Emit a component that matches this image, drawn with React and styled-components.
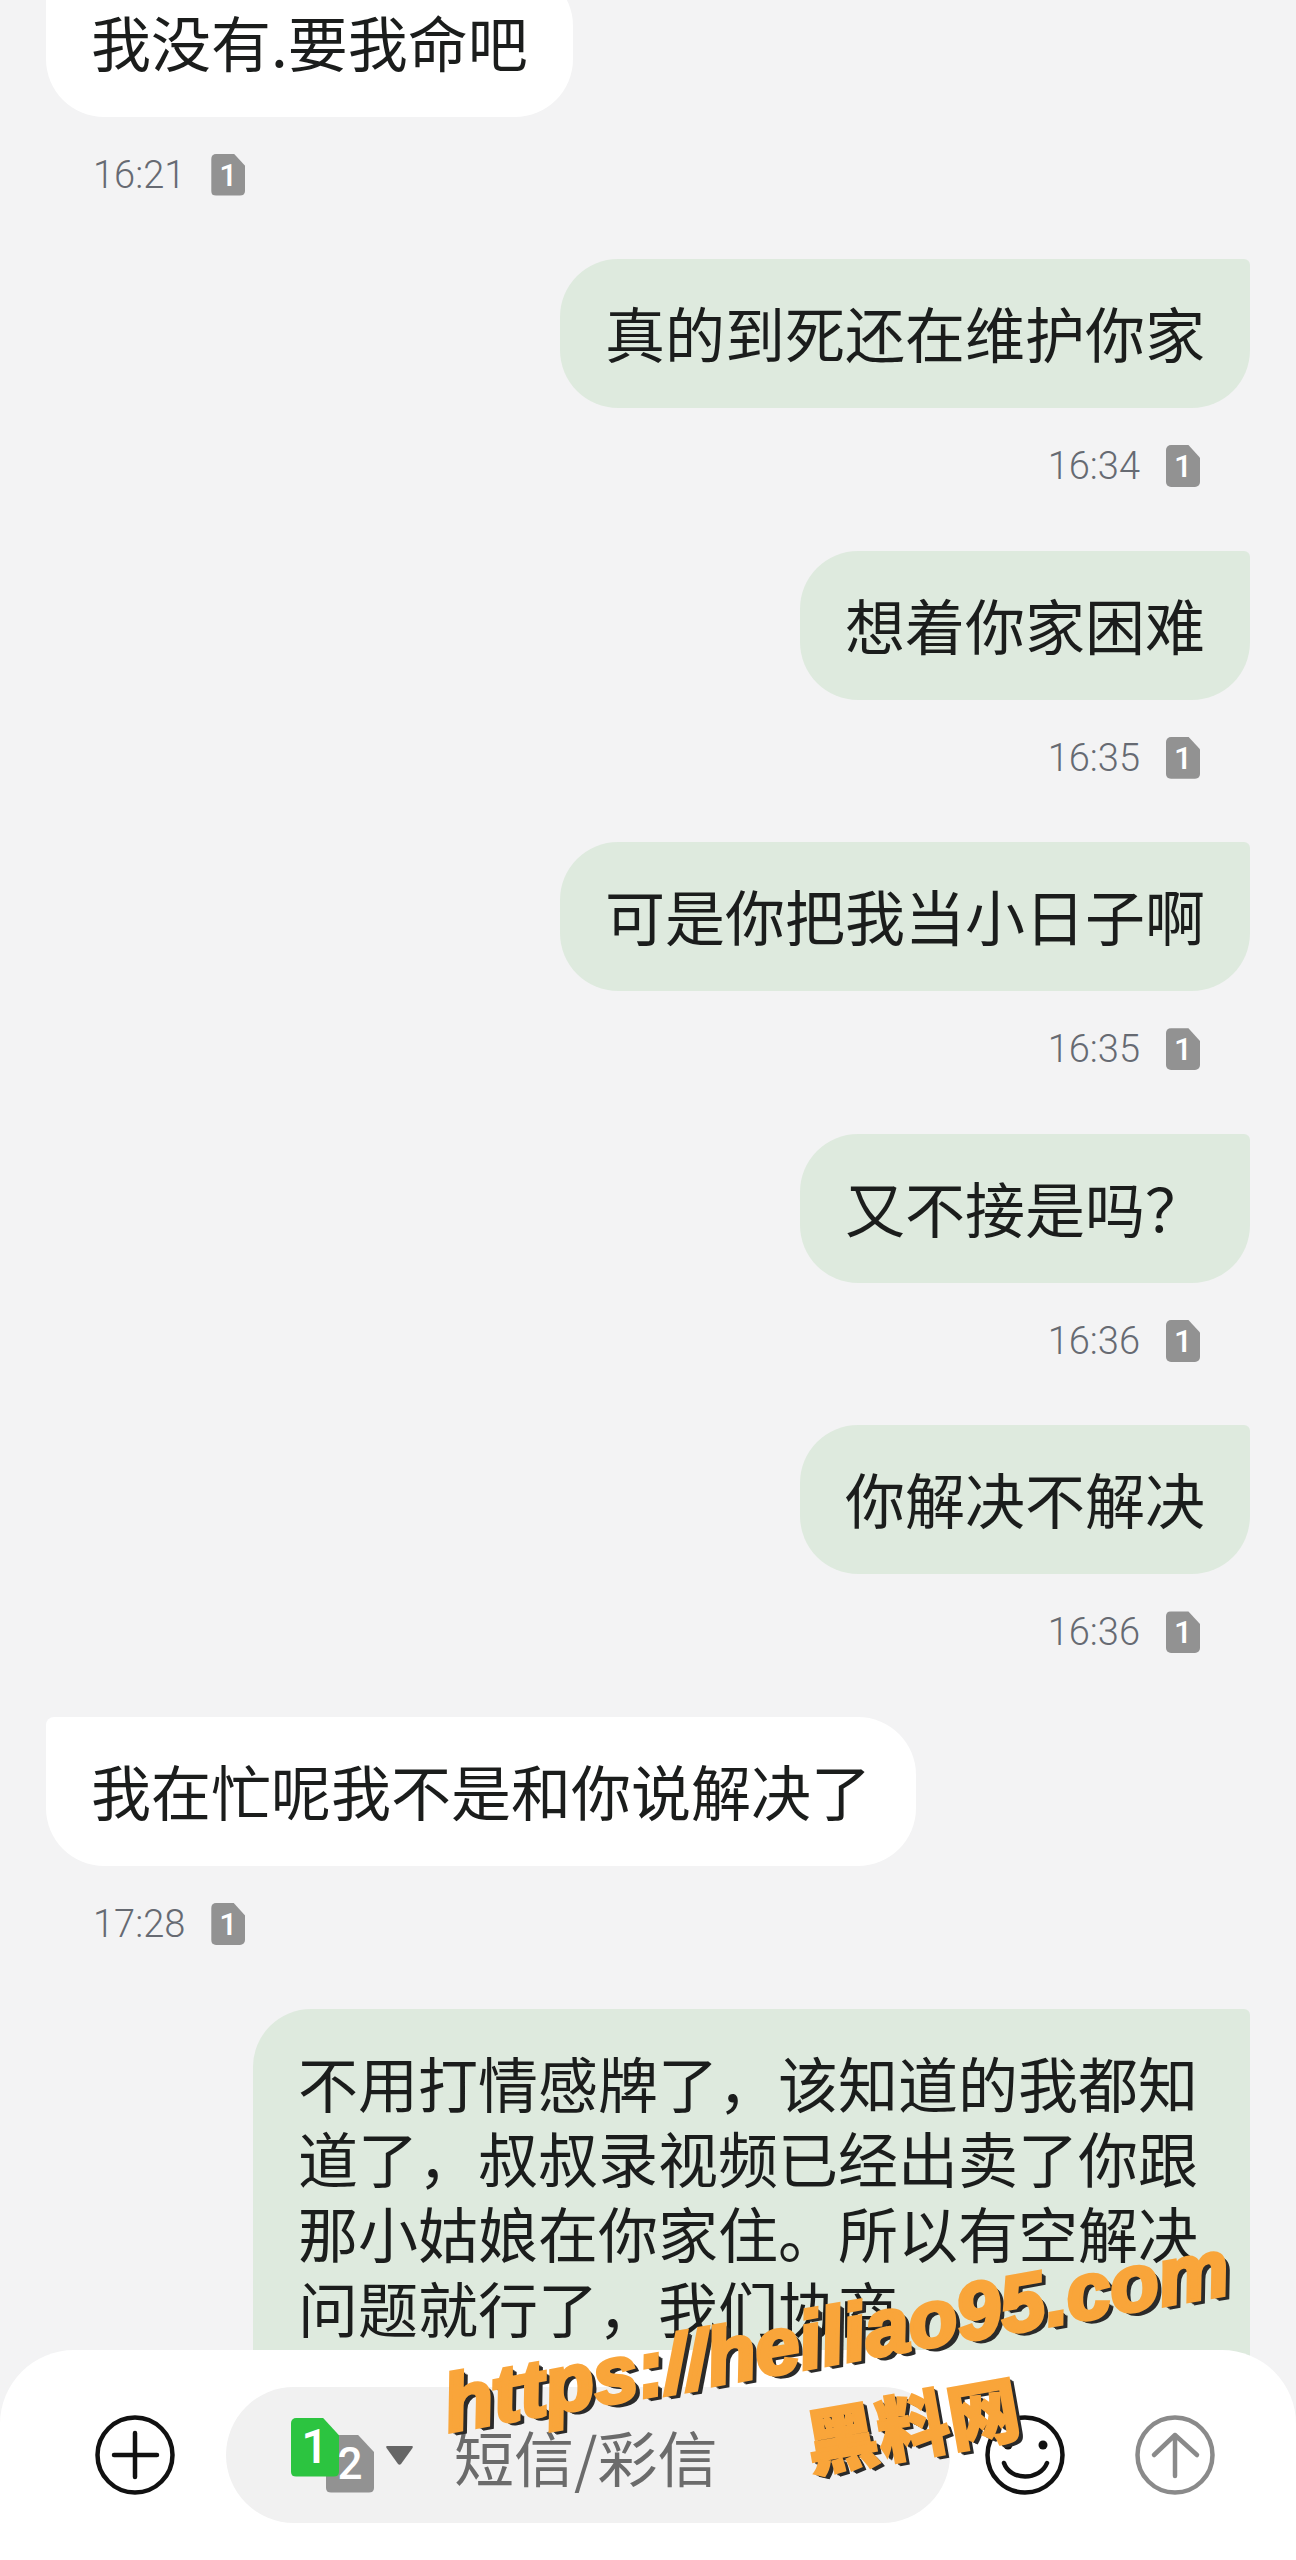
import React from 'react'
import styled, { createGlobalStyle } from 'styled-components'

const cjk = '"Noto Sans CJK SC", "Noto Sans", sans-serif'

const messages = [
  { id: 1, side: 'in', text: '我没有.要我命吧', time: '16:21' },
  { id: 2, side: 'out', text: '真的到死还在维护你家', time: '16:34' },
  { id: 3, side: 'out', text: '想着你家困难', time: '16:35' },
  { id: 4, side: 'out', text: '可是你把我当小日子啊', time: '16:35' },
  { id: 5, side: 'out', text: '又不接是吗？', time: '16:36' },
  { id: 6, side: 'out', text: '你解决不解决', time: '16:36' },
  { id: 7, side: 'in', text: '我在忙呢我不是和你说解决了', time: '17:28' },
  {
    id: 8,
    side: 'out',
    text: '不用打情感牌了，该知道的我都知道了，叔叔录视频已经出卖了你跟那小姑娘在你家住。所以有空解决问题就行了，我们协商',
  },
]

const GlobalStyle = createGlobalStyle`
  html, body {
    margin: 0;
    padding: 0;
    background: #f3f3f4;
  }
`

const Screen = styled.div`
  position: relative;
  width: 1296px;
  height: 2560px;
  overflow: hidden;
  background: #f3f3f4;
  font-family: ${cjk};
  color: #1b1d1c;
`

const Thread = styled.div`
  display: flex;
  flex-direction: column;
  margin-top: -32.5px;
  padding: 0 46px;
`

const Message = styled.div`
  display: flex;
  flex-direction: column;
  align-items: ${props => (props.$side === 'out' ? 'flex-end' : 'flex-start')};
  margin-bottom: 63.6px;
`

// the last bubble runs on under the input bar, so its bottom corners never show
const Bubble = styled.div`
  box-sizing: border-box;
  max-width: 997px;
  padding: 35px 45px ${props => (props.$open ? 130 : 39)}px;
  font-size: 60px;
  line-height: 75px;
  background: ${props => (props.$side === 'out' ? '#deeade' : '#ffffff')};
  border-radius: ${props =>
    props.$side === 'out' ? '58px 6px 58px 58px' : '8px 58px 58px 58px'};
`

const Meta = styled.div`
  display: flex;
  align-items: center;
  gap: 26px;
  height: 42px;
  margin-top: 37px;
  padding: 0 50px 0 47px;
`

const Time = styled.span`
  font-family: Roboto, sans-serif;
  font-weight: 300;
  font-size: 38px;
  line-height: 42px;
  color: #666a72;
`

const SimBadge = styled.div`
  display: flex;
  align-items: center;
  justify-content: center;
  flex: none;
  width: ${props => props.$w}px;
  height: ${props => props.$h}px;
  border-radius: 5px;
  clip-path: polygon(0 0, 66% 0, 100% 30%, 100% 100%, 0 100%);
  background: ${props => props.$color || '#929292'};
  color: #ffffff;
  font-family: Roboto, sans-serif;
  font-weight: 500;
  font-size: ${props => props.$size}px;
  line-height: 1;
`

const InputBar = styled.div`
  position: absolute;
  left: 0;
  right: 0;
  bottom: 0;
  height: 210px;
  display: flex;
  align-items: center;
  padding-left: 95px;
  background: #ffffff;
  border-radius: 74px 74px 0 0;
`

const RoundIcon = styled.svg`
  display: block;
  flex: none;
  width: 80px;
  height: 80px;
  margin-left: ${props => props.$gap || 0}px;
  fill: none;
  stroke: ${props => props.$color || '#111111'};
  stroke-width: 4.5;
  stroke-linecap: round;
  stroke-linejoin: round;
`

const InputPill = styled.div`
  display: flex;
  align-items: center;
  width: 724px;
  height: 136px;
  margin-left: 51px;
  padding-left: 65px;
  box-sizing: border-box;
  background: #f1f1f1;
  border-radius: 68px;
`

const SimPair = styled.div`
  display: flex;
  align-items: flex-start;
  height: 75px;
`

const GreenSim = styled(SimBadge)`
  position: relative;
  z-index: 1;
`

const GraySim = styled(SimBadge)`
  margin: 17px 0 0 -13px;
`

const Caret = styled.svg`
  display: block;
  flex: none;
  width: 27px;
  height: 19px;
  margin-left: 12px;
  fill: #666666;
`

const Placeholder = styled.span`
  margin-left: 41px;
  font-size: 60px;
  line-height: 75px;
  color: #6b6b6b;
`

const WatermarkUrl = styled.div`
  position: absolute;
  left: 836px;
  top: 2336px;
  transform: translate(-50%, -50%) rotate(-10deg);
  white-space: nowrap;
  font-family: "Liberation Sans", Arial, sans-serif;
  font-style: italic;
  font-weight: 700;
  font-size: 80px;
  line-height: 1;
  color: #f9a53a;
  -webkit-text-stroke: 4px #f9a53a;
  text-shadow: 2px 2px 0 #2b2b2b, 3px 3px 0 #2b2b2b, 4px 4px 0 #2b2b2b, 5px 5px 0 #2b2b2b;
`

const WatermarkName = styled.div`
  position: absolute;
  left: 912px;
  top: 2422px;
  transform: translate(-50%, -50%) rotate(-10deg);
  white-space: nowrap;
  font-family: ${cjk};
  font-weight: 900;
  font-size: 72px;
  line-height: 1;
  color: #f9a53a;
  -webkit-text-stroke: 2px #f9a53a;
  text-shadow: 2px 2px 0 #2b2b2b, 3px 3px 0 #2b2b2b, 4px 4px 0 #2b2b2b;
`

export default function App() {
  return (
    <Screen lang="zh-CN">
      <GlobalStyle />
      <Thread>
        {messages.map(msg => (
          <Message key={msg.id} $side={msg.side}>
            <Bubble $side={msg.side} $open={!msg.time}>{msg.text}</Bubble>
            {msg.time && (
              <Meta>
                <Time>{msg.time}</Time>
                <SimBadge $w={34} $h={42} $size={32}>1</SimBadge>
              </Meta>
            )}
          </Message>
        ))}
      </Thread>

      <InputBar>
        <RoundIcon viewBox="0 0 80 80">
          <circle cx="40" cy="40" r="37.5" />
          <path d="M19 40H62M40 18V62" />
        </RoundIcon>
        <InputPill>
          <SimPair>
            <GreenSim $w={48} $h={59} $size={48} $color="#2cc440">1</GreenSim>
            <GraySim $w={48} $h={58} $size={44}>2</GraySim>
          </SimPair>
          <Caret viewBox="0 0 27 19">
            <path d="M1 0H26C27 0 27 1 26.5 2L15 18C14 19 13 19 12 18L.5 2C0 1 0 0 1 0Z" />
          </Caret>
          <Placeholder>短信/彩信</Placeholder>
        </InputPill>
        <RoundIcon viewBox="0 0 80 80" $gap={35}>
          <circle cx="40" cy="40" r="37.5" />
          <circle cx="23" cy="30" r="4.5" fill="#111111" stroke="none" />
          <circle cx="58" cy="30" r="4.5" fill="#111111" stroke="none" />
          <path d="M19 48C25 66 55 66 62 48" />
        </RoundIcon>
        <RoundIcon viewBox="0 0 80 80" $gap={70} $color="#8a8a8a">
          <circle cx="40" cy="40" r="37.5" />
          <path d="M40 20V61M19 40L40 20L62 40" />
        </RoundIcon>
      </InputBar>

      <WatermarkUrl>https://heiliao95.com</WatermarkUrl>
      <WatermarkName>黑料网</WatermarkName>
    </Screen>
  )
}
